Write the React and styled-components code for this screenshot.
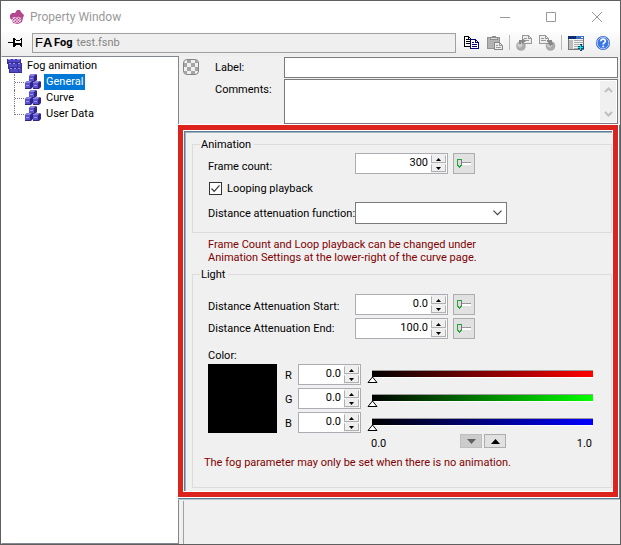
import React, { useState } from "react";
import styled, { createGlobalStyle, css } from "styled-components";

const GlobalStyle = createGlobalStyle`
  *, *::before, *::after { box-sizing: border-box; }
  html, body { margin: 0; height: 100%; overflow: hidden; }
  body, button, input, textarea, select {
    font-family: Roboto, "DejaVu Sans Condensed", sans-serif;
    font-size: 11px;
    line-height: 13px;
    color: #000;
  }
  svg { display: block; flex: none; }
`;

const Window = styled.div`
  display: flex;
  flex-direction: column;
  height: 100vh;
  border: 1px solid #5f5f5f;
  background: #f0f0f0;
`;

const TitleBar = styled.header`
  display: flex;
  align-items: center;
  height: 31px;
  padding-left: 8px;
  background: #fff;
`;

const Title = styled.h1`
  flex: 1;
  margin: 0 0 0 5px;
  font: 12px/16px Roboto, "Open Sans", sans-serif;
  color: #999;
`;

const CaptionButton = styled.button`
  display: grid;
  place-items: center;
  width: 46px;
  height: 30px;
  padding: 0;
  border: 0;
  background: none;
`;

const Toolbar = styled.div`
  display: flex;
  align-items: center;
  height: 24px;
  padding: 0 8px 3px 7px;
  background: linear-gradient(#fdfdfd, #ededed);
`;

const PathBox = styled.div`
  display: flex;
  align-items: center;
  flex: 1;
  height: 20px;
  margin: 0 6px 0 8px;
  padding-left: 2px;
  border: 1px solid #a0a0a0;
  background: #efefef;
  color: #858585;
`;

const Badge = styled.span`
  width: 19px;
  font: 13px/18px "Liberation Sans", sans-serif;
  color: #000;
`;

const FileKind = styled.b`
  margin-right: 4px;
  color: #000;
`;

const ToolButton = styled.button`
  display: grid;
  place-items: center;
  width: 18px;
  height: 20px;
  margin-right: ${(p) => p.$gap || 0}px;
  padding: 0;
  border: 0;
  background: none;
`;

const Divider = styled.span`
  width: 1px;
  height: 15px;
  margin-right: 5px;
  background: #b8b8b8;
`;

const Body = styled.main`
  display: flex;
  flex: 1;
  min-height: 0;
`;

const TreePane = styled.nav`
  width: 178px;
  padding-top: 1px;
  border: 1px solid #828790;
  border-left-color: #fff;
  background: #fff;
`;

const TreeRow = styled.div`
  display: flex;
  align-items: center;
  height: 16px;
  padding-left: ${(p) => (p.$child ? 12 : 4)}px;
`;

const TreeLink = styled.a`
  padding: 1px 2px 2px;
  margin-left: ${(p) => (p.$root ? 1 : 2)}px;
  line-height: 13px;
  color: ${(p) => (p.$active ? "#fff" : "#000")};
  background: ${(p) => (p.$active ? "#0078d7" : "transparent")};
  text-decoration: none;
`;

const Branch = styled.span`
  width: 11px;
  height: 16px;
  border-left: 1px dotted #777;
  background: repeating-linear-gradient(90deg, #777 0 1px, transparent 1px 2px) 0 8px / 100% 1px no-repeat;
  ${(p) => p.$last && css`
    height: 9px;
    align-self: flex-start;
  `}
`;

const Pane = styled.section`
  display: flex;
  flex-direction: column;
  flex: 1;
  min-width: 0;
  margin-left: 4px;
  padding: 1px 2px 0 0;
`;

const Header = styled.div`
  display: grid;
  grid-template-columns: 32px 69px 1fr;
  grid-template-rows: 21px 45px;
  row-gap: 1px;
`;

const HeaderLabel = styled.label`
  padding-top: 4px;
`;

const HeaderIcon = styled.div`
  padding-top: 2px;
`;

const LabelInput = styled.input`
  min-width: 0;
  padding: 0 3px;
  border: 1px solid #7a7a7a;
  background: #fff;
`;

const CommentBox = styled.div`
  display: flex;
  border: 1px solid #7a7a7a;
  background: #fff;
`;

const CommentText = styled.textarea`
  flex: 1;
  min-width: 0;
  padding: 1px 3px;
  border: 0;
  resize: none;
  overflow: hidden;
  outline: none;
`;

const ScrollBar = styled.div`
  display: flex;
  flex-direction: column;
  justify-content: space-between;
  width: 16px;
  margin: 1px;
  background: #f0f0f0;
`;

const ScrollButton = styled.button`
  display: grid;
  place-items: center;
  height: 17px;
  padding: 0;
  border: 0;
  background: none;
`;

const Settings = styled.div`
  position: relative;
  padding: 14px 6px 10px 9px;

  &::after {
    content: "";
    position: absolute;
    inset: 1px 0 1px -5px;
    border: 5px solid #dc241c;
    outline: 1px solid #fff;
    box-shadow: 1px 1px 0 1px #5c7d92, 1px 2px 0 1px #b5c5cf, inset 0 0 0 1px #fff;
    pointer-events: none;
  }
`;

const FrameEdge = styled.div`
  position: absolute;
  inset: 7px 6px 7px 1px;
  border-top: 1px solid #5c7d92;
  border-left: 1px solid #5c7d92;
  box-shadow: inset 1px 1px 0 #9db3c0;
  pointer-events: none;
`;

const Lower = styled.div`
  flex: 1;
  margin-top: 3px;
  border-left: 1px solid #a0a0a0;
`;

const Group = styled.fieldset`
  min-width: 0;
  margin: 0;
  padding: ${(p) => (p.$light ? "13px 13px 18px 15px" : "2px 15px 8px 15px")};
  border: 1px solid #dcdcdc;
`;

const Legend = styled.legend`
  margin-left: -8px;
  padding: 0 3px 0 1px;
`;

const Row = styled.div`
  display: flex;
  align-items: center;
  gap: 5px;
  margin-bottom: ${(p) => p.$after || 0}px;
`;

const RowLabel = styled.label`
  width: 142px;
  padding-top: ${(p) => p.$drop || 0}px;
  white-space: nowrap;
`;

const Spin = styled.div`
  display: flex;
  width: ${(p) => p.$width}px;
  height: 21px;
  padding-right: 1px;
  border: 1px solid #abadb3;
  background: #fff;
`;

const SpinInput = styled.input`
  flex: 1;
  min-width: 0;
  padding: 0 3px 2px;
  border: 0;
  background: none;
  text-align: right;
  outline: none;
`;

const SpinButtons = styled.div`
  display: flex;
  flex-direction: column;
  gap: 1px;
  width: 15px;
  padding: 1px 0;
  background: #f0f0f0;
`;

const SpinButton = styled.button`
  display: grid;
  place-items: center;
  flex: 1;
  padding: 0;
  border: 1px solid #b0b0b0;
  border-top-color: #eee;
  background: #efefef;
`;

const FlatButton = styled.button`
  display: grid;
  place-items: center;
  width: 22px;
  height: ${(p) => p.$height}px;
  padding: 0;
  border: 1px solid ${(p) => (p.disabled ? "#bfbfbf" : "#adadad")};
  background: ${(p) => (p.disabled ? "#cccccc" : "#e1e1e1")};
`;

const CheckRow = styled.label`
  display: flex;
  align-items: center;
  gap: 5px;
  height: 17px;
  margin: 6px 0 5px 1px;
`;

const CheckBox = styled.input`
  appearance: none;
  width: 13px;
  height: 13px;
  margin: 0;
  border: 1px solid #333;
  background: #fff;

  &:checked {
    background: #fff url("data:image/svg+xml,%3Csvg xmlns='http://www.w3.org/2000/svg' viewBox='0 0 11 11'%3E%3Cpath d='M1.5 5.5l2.7 2.8 5.3-6' fill='none' stroke='%23333' stroke-width='1.2'/%3E%3C/svg%3E") center / 11px no-repeat;
  }
`;

const Combo = styled.select`
  appearance: none;
  width: 152px;
  height: 22px;
  border: 1px solid #7a7a7a;
  border-radius: 0;
  background: #fff url("data:image/svg+xml,%3Csvg xmlns='http://www.w3.org/2000/svg' viewBox='0 0 9 6'%3E%3Cpath d='M.5.7l4 4 4-4' fill='none' stroke='%23444' stroke-width='1.2'/%3E%3C/svg%3E") right 4px center / 9px 6px no-repeat;
`;

const ComboRow = styled(Row)`
  gap: 0;
`;

const ComboLabel = styled(RowLabel)`
  width: 147px;
`;

const Notice = styled.p`
  margin: ${(p) => p.$margin};
  color: #800000;
`;

const ColorTitle = styled.div`
  margin: 10px 0 2px;
`;

const ColorArea = styled.div`
  display: flex;
`;

const Swatch = styled.div`
  width: 69px;
  height: 69px;
  margin-right: 8px;
  background: #000;
`;

const Channels = styled.div`
  flex: 1;
  min-width: 0;
  display: flex;
  flex-direction: column;
  gap: 3px;
`;

const Channel = styled.div`
  display: flex;
  align-items: center;
`;

const ChannelLabel = styled.label`
  width: 13px;
  padding-top: 2px;
`;

const Slider = styled.input`
  appearance: none;
  flex: 1;
  min-width: 0;
  height: 15px;
  margin: 6px 0 0 6px;
  background:
    linear-gradient(#9a9a9a, #9a9a9a) 5px 0 / calc(100% - 10px) 1px no-repeat,
    linear-gradient(90deg, #000, ${(p) => p.$color}) 5px 1px / calc(100% - 10px) 6px no-repeat,
    linear-gradient(#fff, #fff) 5px 7px / calc(100% - 10px) 1px no-repeat;

  &::-webkit-slider-runnable-track { height: 15px; }
  &::-webkit-slider-thumb {
    appearance: none;
    width: 11px;
    height: 7px;
    margin-top: 6px;
    border: 0;
    background: url("data:image/svg+xml,%3Csvg xmlns='http://www.w3.org/2000/svg' viewBox='0 0 11 7'%3E%3Cpath d='M1 6.5h9L5.5 1z' fill='%23fff' stroke='%23000'/%3E%3C/svg%3E") no-repeat;
  }
`;

const Scale = styled.div`
  display: flex;
  align-items: flex-start;
  margin: 1px 6px 0 163px;
  gap: 2px;
`;

const ScaleText = styled.span`
  padding-top: 3px;
  flex: ${(p) => (p.$start ? "0 0 87px" : "1")};
  text-align: ${(p) => (p.$start ? "left" : "right")};
`;

const Arrow = ({ down, small, color = "#000" }) => (
  <svg width={small ? 5 : 9} height={small ? 3 : 5} viewBox="0 0 10 5" preserveAspectRatio="none">
    <path d={down ? "M0 0h10L5 5z" : "M0 5h10L5 0z"} fill={color} />
  </svg>
);

const Chevron = ({ down }) => (
  <svg width="9" height="6" viewBox="0 0 9 6">
    <path d={down ? "M1 1l3.5 3.5L8 1" : "M1 5l3.5-3.5L8 5"} fill="none" stroke="#bfbfbf" strokeWidth="2" />
  </svg>
);

const AppIcon = () => (
  <svg width="16" height="16" viewBox="0 0 16 16">
    <path d="M1 6l2-2 3 0 2-3 3 0 1 2 3 3-1 3-1 4-4 2-5-1-1-3-2-2z" fill="#b4458f" />
    <path d="M3.500 8l6 6M6.500 8l5 5M9.500 8l2.500 2.500M3.500 11l3 3M6 8l-3 3M9.500 8L4 13M12 8.500L6.500 14M12 11l-3 3" stroke="#f7dcec" strokeWidth="1" />
  </svg>
);

const PinIcon = () => (
  <svg width="16" height="11" viewBox="0 0 16 11" shapeRendering="crispEdges">
    <path d="M0 5h6v1H0zM5 1h2v9H5zM7 2h1v1H7zM8 3h4v1H8zM12 2h1v1h-1zM7 6h6v2H7zM7 8h1v1H7zM12 8h1v1h-1zM13 1h1v9h-1z" fill="#000" />
    <path d="M7 4h6v2H7z" fill="#fff" />
  </svg>
);

const Pages = () => (
  <svg width="16" height="16" viewBox="0 0 16 16" shapeRendering="crispEdges">
    <path d="M1.500 1.500h4l3 3v7h-7z" fill="#fff" stroke="#000" />
    <path d="M5.500 1.500v3h3M3 4.500h2M3 6.500h4M3 8.500h4" fill="none" stroke="#000" />
    <path d="M7.500 4.500h5l3 3v6h-8z" fill="#fff" stroke="#000080" />
    <path d="M12.500 4.500v3h3M9 7.500h2M9 9.500h5M9 11.500h5" fill="none" stroke="#000080" />
  </svg>
);

const Clipboard = () => (
  <svg width="16" height="16" viewBox="0 0 16 16" shapeRendering="crispEdges">
    <path d="M.500 2.500h12v11H.500z" fill="#b3b3b3" stroke="#929292" />
    <path d="M3 2h2V1h4v1h2v3H3z" fill="#8c8c8c" />
    <path d="M4 3h6v1H4z" fill="#ddd" />
    <path d="M7.500 7.500h5l3 3v4h-8z" fill="#eee" stroke="#888" />
    <path d="M12.500 7.500v3h3M9 10.500h2M9 12.500h5" fill="none" stroke="#999" />
  </svg>
);

const Transfer = ({ down }) => (
  <svg width="17" height="16" viewBox="0 0 17 16">
    <circle cx={down ? 11.5 : 5} cy="11" r="4.800" fill="#aaa" />
    <circle cx={down ? 10.5 : 4} cy="10" r="2.500" fill="#ccc" />
    <g transform={down ? "translate(-6 0)" : undefined} shapeRendering="crispEdges">
      <path d="M6.500 .500h6l3 3v5h-9z" fill="#eee" stroke="#999" />
      <path d="M12.500 .500v3h3M8 3.500h3M8 5.500h5" fill="none" stroke="#999" />
    </g>
    <path d={down ? "M8 5h5v3h2l-3.500 3L8 8h2V7H8z" : "M3 9V5h3V3l4 3-4 3V7H5v2z"} fill="#888" />
  </svg>
);

const TableIcon = () => (
  <svg width="16" height="16" viewBox="0 0 16 16" shapeRendering="crispEdges">
    <path d="M.500 1.500h15v13H.500z" fill="#f4f4f4" stroke="#777" />
    <path d="M0 1h8v3H0z" fill="#0c2d70" />
    <path d="M8 1h8v3H8z" fill="#3b6dbd" />
    <path d="M13 2h2v1h-2z" fill="#fff" />
    <path d="M1 5h4v9H1z" fill="#bbb" />
    <path d="M6 5.500h9M6 7.500h9M6 9.500h9M6 11.500h5M6 13.500h4" stroke="#aaa" />
    <path d="M12 9h2v2h2v3h-2v2h-2v-2h-2v-3h2z" fill="#004b70" />
    <path d="M12 10h1v2h2v1h-2v2h-1v-2h-2v-1h2z" fill="#16e6ef" />
  </svg>
);

const HelpIcon = () => (
  <svg width="16" height="16" viewBox="0 0 16 16">
    <circle cx="8" cy="8" r="7" fill="#2452c7" />
    <circle cx="8" cy="8" r="5.900" fill="#3a77e6" stroke="#c7dcff" strokeWidth=".9" />
    <path d="M5.800 6.300C5.800 3.200 10.500 3.500 10.300 6.200 10.200 7.700 8.200 7.700 8.200 9.400M8.200 10.800v1.500" fill="none" stroke="#fff" strokeWidth="1.700" />
  </svg>
);

const StackIcon = () => (
  <svg width="18" height="16" viewBox="0 0 18 16" shapeRendering="crispEdges">
    <path d="M1 1h14v4h1v10H3v-4H2V6H1z" fill="#3b2f9b" />
    <path d="M2 1h3v1H2zM7 1h2v1H7zM11 1h3v1h-3zM3 5h2v1H3zM7 5h2v1H7zM12 5h2v1h-2zM4 10h2v1H4zM8 10h2v1H8zM12 10h2v1h-2z" fill="#9a92f0" />
    <path d="M2 2h4v2H2zM6 2h4v2H6zM10 2h4v2h-4zM3 6h4v3H3zM7 6h4v3H7zM12 6h3v3h-3zM4 11h4v3H4zM8 11h4v3H8zM13 11h2v3h-2z" fill="#5148c4" />
  </svg>
);

const Cube = ({ x, y }) => (
  <g transform={`translate(${x} ${y})`}>
    <path d="M0 2l2-2h5l1 1v5L6 8H0z" fill="#302681" />
    <path d="M0 2l2-2h5L5 2z" fill="#8983e6" />
    <path d="M0 2h5v5H0z" fill="#5a50d0" />
    <path d="M1 4h3v1H1z" fill="#9a94f4" />
  </g>
);

const CubesIcon = () => (
  <svg width="17" height="16" viewBox="0 0 17 16">
    <Cube x={4} y={0} />
    <Cube x={0} y={7} />
    <Cube x={8} y={7} />
  </svg>
);

const CheckerIcon = () => (
  <svg width="16" height="16" viewBox="0 0 16 16">
    <rect x=".5" y=".5" width="15" height="15" rx="3.500" fill="#f0f0f0" stroke="#858585" />
    <path d="M4 1h4v3H4zM12 1h2l1 2v1h-3zM1 4h3v4H1zM8 4h4v4H8zM4 8h4v4H4zM12 8h3v4h-3zM1 12h3v3H3l-2-1zM8 12h4v3H8z" fill="#a5a5a5" />
  </svg>
);

const SliderIcon = () => (
  <svg width="16" height="11" viewBox="0 0 16 11" shapeRendering="crispEdges">
    <path d="M5 4h10v1H5z" fill="#999" />
    <path d="M5 5h10v2H5z" fill="#fff" />
    <path d="M1 1h5v6L3.500 9.500 1 7z" fill="#ddd" />
    <path d="M1.500 1v6l2 2 2-2M1 1.500h5" fill="none" stroke="#22a43a" />
    <path d="M5.500 2v5" stroke="#777" />
  </svg>
);

function NumberBox({ id, initial, width, label }) {
  const [value, setValue] = useState(initial);
  const digits = initial.includes(".") ? 1 : 0;
  const step = (amount) => setValue((Number(value) + amount).toFixed(digits));
  return (
    <Spin $width={width}>
      <SpinInput id={id} value={value} onChange={(e) => setValue(e.target.value)} />
      <SpinButtons>
        <SpinButton aria-label={`Increase ${label}`} onClick={() => step(1)}><Arrow small /></SpinButton>
        <SpinButton aria-label={`Decrease ${label}`} onClick={() => step(-1)}><Arrow small down /></SpinButton>
      </SpinButtons>
    </Spin>
  );
}

function NumberRow({ id, label, initial, after, drop }) {
  return (
    <Row $after={after}>
      <RowLabel htmlFor={id} $drop={drop}>{label}</RowLabel>
      <NumberBox id={id} initial={initial} width={93} label={label} />
      <FlatButton $height={21} aria-label={`${label} slider`}><SliderIcon /></FlatButton>
    </Row>
  );
}

const channels = [
  { name: "R", color: "#ff0000" },
  { name: "G", color: "#00ff00" },
  { name: "B", color: "#0000ff" },
];

const pages = ["General", "Curve", "User Data"];

export default function App() {
  const [page, setPage] = useState("General");
  return (
    <>
      <GlobalStyle />
      <Window>
        <TitleBar>
          <AppIcon />
          <Title>Property Window</Title>
          <CaptionButton aria-label="Minimize">
            <svg width="10" height="10"><path d="M0 5.500h10" stroke="#999" /></svg>
          </CaptionButton>
          <CaptionButton aria-label="Maximize">
            <svg width="10" height="10"><path d="M.500.500h9v9h-9z" fill="none" stroke="#999" /></svg>
          </CaptionButton>
          <CaptionButton aria-label="Close">
            <svg width="10" height="10"><path d="M0 0l10 10M10 0L0 10" stroke="#999" /></svg>
          </CaptionButton>
        </TitleBar>
        <Toolbar>
          <PinIcon />
          <PathBox>
            <Badge>F<b>A</b></Badge>
            <FileKind>Fog</FileKind>
            test.fsnb
          </PathBox>
          <ToolButton aria-label="Copy" $gap={6}><Pages /></ToolButton>
          <ToolButton aria-label="Paste" $gap={5}><Clipboard /></ToolButton>
          <Divider />
          <ToolButton aria-label="Export" $gap={5}><Transfer /></ToolButton>
          <ToolButton aria-label="Import" $gap={5}><Transfer down /></ToolButton>
          <Divider />
          <ToolButton aria-label="Add window" $gap={9}><TableIcon /></ToolButton>
          <ToolButton aria-label="Help"><HelpIcon /></ToolButton>
        </Toolbar>
        <Body>
          <TreePane>
            <TreeRow><StackIcon /><TreeLink href="#root" $root>Fog animation</TreeLink></TreeRow>
            {pages.map((name, i) => (
              <TreeRow key={name} $child>
                <Branch $last={i === pages.length - 1} />
                <CubesIcon />
                <TreeLink href={`#${i}`} $active={page === name} onClick={() => setPage(name)}>{name}</TreeLink>
              </TreeRow>
            ))}
          </TreePane>
          <Pane>
            <Header>
              <HeaderIcon><CheckerIcon /></HeaderIcon>
              <HeaderLabel htmlFor="label">Label:</HeaderLabel>
              <LabelInput id="label" />
              <span />
              <HeaderLabel htmlFor="comments">Comments:</HeaderLabel>
              <CommentBox>
                <CommentText id="comments" />
                <ScrollBar>
                  <ScrollButton aria-label="Scroll up"><Chevron /></ScrollButton>
                  <ScrollButton aria-label="Scroll down"><Chevron down /></ScrollButton>
                </ScrollBar>
              </CommentBox>
            </Header>
            <Settings>
              <FrameEdge />
              <Group>
                <Legend>Animation</Legend>
                <NumberRow id="frames" label="Frame count:" initial="300" drop={6} />
                <CheckRow><CheckBox type="checkbox" defaultChecked />Looping playback</CheckRow>
                <ComboRow>
                  <ComboLabel htmlFor="function">Distance attenuation function:</ComboLabel>
                  <Combo id="function" />
                </ComboRow>
              </Group>
              <Notice $margin="5px 0 4px 16px">
                Frame Count and Loop playback can be changed under<br />
                Animation Settings at the lower-right of the curve page.
              </Notice>
              <Group $light>
                <Legend>Light</Legend>
                <NumberRow id="start" label="Distance Attenuation Start:" initial="0.0" after={3} drop={4} />
                <NumberRow id="end" label="Distance Attenuation End:" initial="100.0" />
                <ColorTitle>Color:</ColorTitle>
                <ColorArea>
                  <Swatch />
                  <Channels>
                    {channels.map(({ name, color }) => (
                      <Channel key={name}>
                        <ChannelLabel htmlFor={name}>{name}</ChannelLabel>
                        <NumberBox id={name} initial="0.0" width={63} label={name} />
                        <Slider type="range" min="0" max="1" step="0.1" defaultValue="0" $color={color} aria-label={`${name} level`} />
                      </Channel>
                    ))}
                  </Channels>
                </ColorArea>
                <Scale>
                  <ScaleText $start>0.0</ScaleText>
                  <FlatButton $height={14} disabled aria-label="Lower range"><Arrow down color="#606060" /></FlatButton>
                  <FlatButton $height={14} aria-label="Raise range"><Arrow /></FlatButton>
                  <ScaleText>1.0</ScaleText>
                </Scale>
                <Notice $margin="6px 0 0 -4px">The fog parameter may only be set when there is no animation.</Notice>
              </Group>
            </Settings>
            <Lower />
          </Pane>
        </Body>
      </Window>
    </>
  );
}
